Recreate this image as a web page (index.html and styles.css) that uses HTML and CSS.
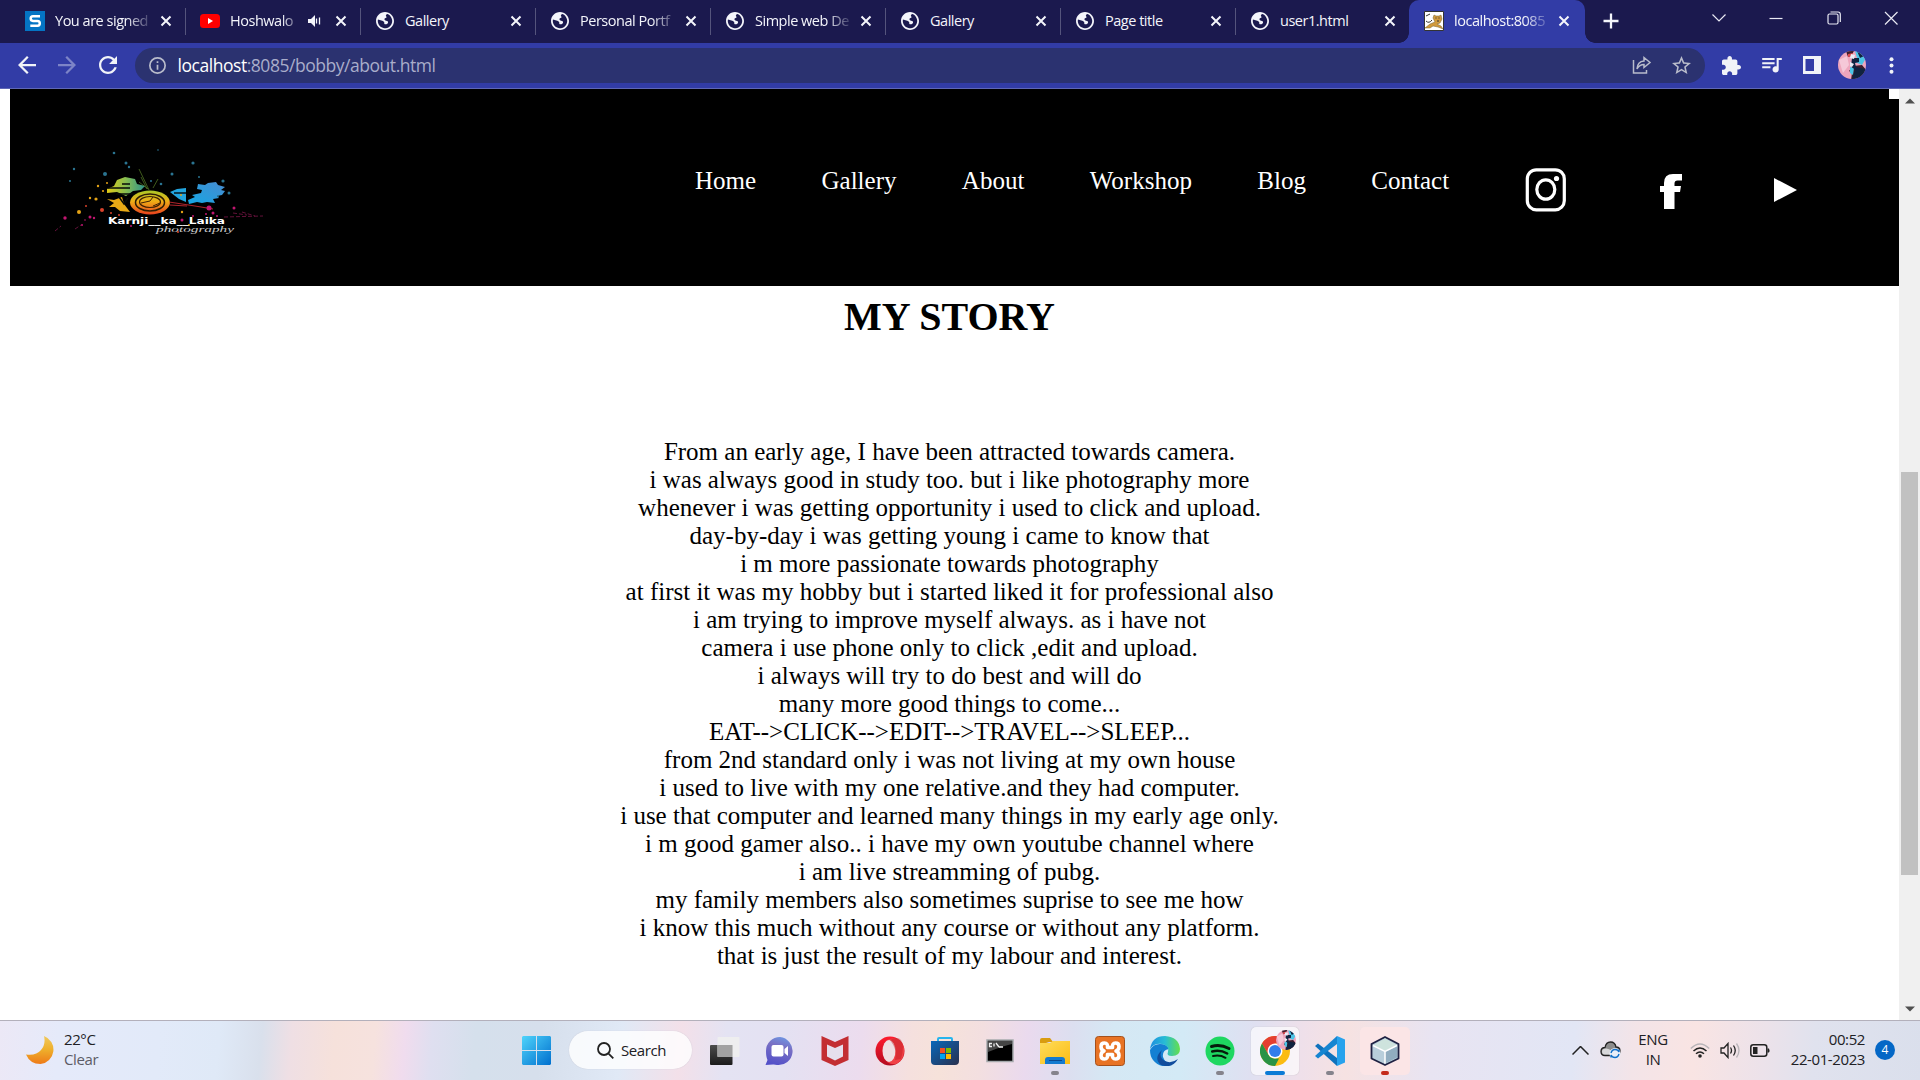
FILE: index.html
```html
<!DOCTYPE html>
<html lang="en">
<head>
<meta charset="utf-8">
<title>My Story</title>
<link rel="stylesheet" href="styles.css">
</head>
<body>
<svg class="defs" width="0" height="0">
  <defs>
    <symbol id="globe" viewBox="2 2 20 20"><path d="M12 2C6.480 2 2 6.480 2 12s4.480 10 10 10 10-4.480 10-10S17.520 2 12 2zm-1 17.930c-3.950-.49-7-3.850-7-7.930 0-.62.08-1.210.21-1.790 2.500.6 5.500 1.200 6.790 2.790.6 1-.4 2.300 1 2.600 1.600.2 3.600-.4 3.400-2.600-.2-1.300-2-1.200-3-1.600-1.500-.6-1.400-2.400.2-2.700 1.400-.2 1.400-1.400.6-2.100-.8-.8.4-2 1.800-2.300C17.500 5.300 20 8.650 20 12c0 4-3 7.600-7 7.930z"/></symbol>
    <symbol id="x" viewBox="0 0 12 12"><path d="M1.500 1.500l9 9M10.500 1.500l-9 9" fill="none" stroke="currentColor" stroke-width="2"/></symbol>
    <symbol id="arrow" viewBox="4 4 16 16"><path d="M20 11H7.830l5.590-5.590L12 4l-8 8 8 8 1.410-1.410L7.830 13H20v-2z"/></symbol>
    <symbol id="avatar" viewBox="0 0 28 28">
      <clipPath id="face"><circle cx="14" cy="14" r="14"/></clipPath>
      <g clip-path="url(#face)"><path fill="#eea6bd" d="M0 0h28v28H0z"/><path fill="#f5c8d8" d="M1 9l8-4 2 9-6 8z"/><path fill="#3c1d2c" d="M8 0h8l-3 5-3 1zM15 15l9-1 5 6v9H13l1-7-3-2z"/><path fill="#4cc5e6" d="M17 0h6l5 7-4 7-7-3 2-4zM12 16l4 1-1 7-3-2z"/><path fill="#102340" d="M14 7h7v4l-4 1 1 4 9 2v9l-13 1 3-9-4-4zM19 0h4l3 5-4 2z"/><path fill="#dc4a4f" d="M10 3l5-1-1 3-4 1z"/><path fill="#e9eef7" d="M13 3l4 1-1 4-4-1zM12 11l4 2-2 3-2-1z"/></g>
    </symbol>
  </defs>
</svg>

<div class="window">
  <div class="tabstrip">
    <div class="tab"><svg class="fav" viewBox="0 0 20 20"><path fill="#0474c4" d="M0 0h20v20H0z"/><path fill="none" stroke="#fff" stroke-width="2.500" d="M15 5.200H8Q5.700 5.200 5.700 7.500T8 9.900h4.500q2.300 0 2.300 2.400t-2.300 2.500H5.300"/></svg><span class="title fade">You are signed</span><svg class="close"><use href="#x"/></svg></div>
    <div class="tab"><svg class="fav" viewBox="0 0 20 20"><rect y="3" width="20" height="14" rx="3.500" fill="#f00"/><path fill="#fff" d="M8 7v6l5-3z"/></svg><span class="title fade short">Hoshwalo</span><svg class="speaker" viewBox="0 0 13 12"><path fill="currentColor" d="M0 4h3l4-4v12L3 8H0z"/><path fill="none" stroke="currentColor" stroke-width="1.300" d="M8.500 3.500v5M11.500 2.500v7"/></svg><svg class="close"><use href="#x"/></svg></div>
    <div class="tab"><svg class="fav globe"><use href="#globe"/></svg><span class="title">Gallery</span><svg class="close"><use href="#x"/></svg></div>
    <div class="tab"><svg class="fav globe"><use href="#globe"/></svg><span class="title fade">Personal Portf</span><svg class="close"><use href="#x"/></svg></div>
    <div class="tab"><svg class="fav globe"><use href="#globe"/></svg><span class="title fade">Simple web De</span><svg class="close"><use href="#x"/></svg></div>
    <div class="tab"><svg class="fav globe"><use href="#globe"/></svg><span class="title">Gallery</span><svg class="close"><use href="#x"/></svg></div>
    <div class="tab"><svg class="fav globe"><use href="#globe"/></svg><span class="title">Page title</span><svg class="close"><use href="#x"/></svg></div>
    <div class="tab last"><svg class="fav globe"><use href="#globe"/></svg><span class="title">user1.html</span><svg class="close"><use href="#x"/></svg></div>
    <div class="tab active"><svg class="fav" viewBox="0 0 20 20"><path fill="#fff" stroke="#333" d="M.5.5h19v19H.5z"/><path fill="#d19a3d" stroke="#75602f" stroke-width=".5" d="M10 4l2 1h3l2-1 1 4-2 4-3 1 4 2 2 3-5-2-5-1-3 2H1l5-4 5-2-2-4z"/><path fill="none" stroke="#333" d="M2 10q3 3 6-1M2 5l4-2M11.500 7h1m2 0h1M13 10h2"/></svg><span class="title fade">localhost:8085</span><svg class="close"><use href="#x"/></svg></div>
    <svg class="plus" viewBox="0 0 16 16"><path d="M8 .5v15M.5 8h15" fill="none" stroke="currentColor" stroke-width="2.300"/></svg>
    <div class="controls">
      <svg viewBox="0 0 14 14"><path d="M.5 3.500L7 10l6.500-6.500"/></svg>
      <svg viewBox="0 0 14 14"><path d="M.5 7.500h13"/></svg>
      <svg viewBox="0 0 14 14"><path d="M2.500 3h7q1.500 0 1.500 1.500v7q0 1.500-1.500 1.500h-7Q1 13 1 11.500v-7Q1 3 2.500 3zM3.500 1H11q2.300 0 2.300 2.300V11"/></svg>
      <svg viewBox="0 0 14 14"><path d="M1 1l12.500 12.500M13.500 1L1 13.500"/></svg>
    </div>
  </div>

  <div class="toolbar">
    <svg class="nav-icon" viewBox="0 0 18 18"><use href="#arrow" width="18" height="18"/></svg>
    <svg class="nav-icon forward" viewBox="0 0 18 18"><use href="#arrow" width="18" height="18"/></svg>
    <svg class="nav-icon reload" viewBox="4 4 16 16"><path d="M17.650 6.350C16.200 4.900 14.210 4 12 4c-4.420 0-7.990 3.580-7.990 8s3.570 8 7.990 8c3.730 0 6.840-2.550 7.730-6h-2.080c-.82 2.330-3.040 4-5.650 4-3.310 0-6-2.690-6-6s2.690-6 6-6c1.660 0 3.140.69 4.220 1.780L13 11h7V4l-2.350 2.350z"/></svg>
    <div class="omnibox">
      <svg class="info" viewBox="2 2 20 20"><circle cx="12" cy="12" r="9" fill="none" stroke="currentColor" stroke-width="2"/><path d="M11 7h2v2h-2zM11 11h2v6h-2z"/></svg>
      <span class="url"><b>localhost</b>:8085/bobby/about.html</span>
      <svg class="share" viewBox="0 0 20 20"><path fill="none" stroke="currentColor" stroke-width="1.500" d="M1.500 5v13h13v-3M5 14q.5-7.500 7-8V2.500l6 5-6 5V9.500Q7.500 9.500 5 14z"/></svg>
      <svg class="star" viewBox="2 2 20 20"><path d="M22 9.240l-7.190-.62L12 2 9.190 8.630 2 9.240l5.460 4.730L5.820 21 12 17.270 18.180 21l-1.630-7.030L22 9.240zM12 15.400l-3.760 2.270 1-4.280-3.320-2.880 4.380-.38L12 6.100l1.710 4.040 4.380.38-3.320 2.880 1 4.280L12 15.400z"/></svg>
    </div>
    <div class="actions">
      <span><svg width="19" height="19" viewBox="2 1 21 21"><path d="M20.500 11H19V7c0-1.100-.9-2-2-2h-4V3.500C13 2.120 11.880 1 10.500 1S8 2.120 8 3.500V5H4c-1.100 0-1.990.9-1.990 2v3.800H3.500c1.490 0 2.700 1.210 2.700 2.700s-1.210 2.700-2.700 2.700H2V20c0 1.100.9 2 2 2h3.800v-1.500c0-1.490 1.210-2.700 2.700-2.700s2.700 1.210 2.700 2.700V22H17c1.100 0 2-.9 2-2v-4h1.500c1.380 0 2.500-1.120 2.500-2.500S21.880 11 20.500 11z"/></svg></span>
      <span><svg width="20" height="16" viewBox="3 5 19 15.500"><path d="M15 6H3v2h12V6zm0 4H3v2h12v-2zM3 16h8v-2H3v2zM17 6v8.180c-.31-.11-.65-.18-1-.18-1.660 0-3 1.340-3 3s1.340 3 3 3 3-1.340 3-3V8h3V6h-5z"/></svg></span>
      <span><svg width="18" height="18" viewBox="0 0 18 18"><path fill-rule="evenodd" d="M0 0h18v18H0zM2.500 3v12H11V3z"/></svg></span>
      <span><svg width="28" height="28"><use href="#avatar"/></svg></span>
      <span><svg width="5" height="17" viewBox="0 0 5 17"><circle cx="2.500" cy="2.200" r="2"/><circle cx="2.500" cy="8.500" r="2"/><circle cx="2.500" cy="14.800" r="2"/></svg></span>
    </div>
  </div>

  <div class="viewport">
    <main class="page">
      <header class="site-header">
        <svg class="logo" viewBox="50 140 220 100" width="220" height="100">
          <defs>
            <linearGradient id="lens" x2="0" y2="1"><stop stop-color="#aac928"/><stop offset=".45" stop-color="#efae16"/><stop offset="1" stop-color="#e9401e"/></linearGradient>
            <linearGradient id="body" x2="1"><stop stop-color="#e2cb16"/><stop offset=".5" stop-color="#86bd51"/><stop offset="1" stop-color="#2d938c"/></linearGradient>
            <linearGradient id="sky" x1="1" x2="0" y2="1"><stop stop-color="#498bd0"/><stop offset="1" stop-color="#13a7e4"/></linearGradient>
          </defs>
          <path fill="url(#body)" d="M107 189l7-3 3-6 8-3 10 2 2 5 8 2-4 4-8 1-7 5-9-4-10 1z"/>
          <path fill="#e7a916" d="M107 199l7 1 8-3 2 7 6 8-10-1-5-4-6 0 5-4z"/>
          <path fill="none" stroke="#070b07" stroke-width="1.500" d="M108 188h22M116 194h20M122 184h8M119 197l5 7 4-6"/>
          <ellipse cx="150" cy="202.500" rx="20" ry="12" fill="url(#lens)"/>
          <ellipse cx="150" cy="202.500" rx="14.500" ry="8.500" fill="none" stroke="#2d1d04" stroke-width="1.500"/>
          <ellipse cx="150" cy="202" rx="10.500" ry="5.500" fill="none" stroke="#402104" stroke-width="1.200"/>
          <path stroke="#402104" fill="none" d="M141 203l9-2 3-4m0 9l7-3"/>
          <path fill="#22a5df" d="M170 192l7-3 9-1v14l-7-3z"/><path stroke="#04141b" stroke-width="1.500" d="M174 193h12"/>
          <path fill="url(#sky)" d="M188 200l7-3-3-2 9-2 1-3-5-1 1-5 7 1 3-2 8-1 2 3 7 2-4 3 4 1-3 4-5 1 2 2-6 1 2 4-8-1-5 1-5-1-8 2z"/>
          <path stroke="#81b93b" stroke-width=".7" opacity=".7" d="M149 190l-10-21M147 189l-6-12M153 188l5-9M148 189l-9-7"/>
          <path stroke="#db2d36" stroke-width=".8" d="M169 202l26 4 18 3M170 205l17 1"/>
          <path stroke="#7b1548" stroke-width=".8" stroke-dasharray="4 2" d="M224 217l39-1M233 213l14 2M242 212l13 4M55 231l6-5M75 229l6-4"/>
          <g fill="#e3a216"><circle cx="96" cy="199" r="1.600"/><circle cx="90" cy="198" r="1.200"/><circle cx="79" cy="212" r="2"/><circle cx="103" cy="191" r="1.100"/><circle cx="98" cy="186" r="1.200"/><circle cx="107" cy="183" r="1"/><circle cx="182" cy="212" r="1.200"/><circle cx="189" cy="225" r="1"/><circle cx="181" cy="195" r="1"/></g>
          <g fill="#d8422b"><circle cx="102" cy="210" r="2"/><circle cx="111" cy="213" r="1"/><circle cx="178" cy="232" r="1"/><circle cx="119" cy="215" r="1"/><circle cx="86" cy="206" r="1"/></g>
          <g fill="#c11670"><circle cx="65" cy="218" r="1.700"/><circle cx="90" cy="217" r="1.500"/><circle cx="94" cy="218" r="1.200"/><circle cx="85" cy="220" r=".8"/><circle cx="209" cy="208" r="2.500"/><circle cx="213" cy="213" r="1.500"/><circle cx="206" cy="214" r="1"/><circle cx="217" cy="216" r="1"/><circle cx="234" cy="208" r="1.500"/><circle cx="182" cy="220" r="1.500"/><circle cx="193" cy="216" r="1"/><circle cx="82" cy="225" r="1"/><circle cx="131" cy="226" r="1"/></g>
          <g fill="#2a7491"><circle cx="114" cy="153" r="1.300"/><circle cx="193" cy="163" r="1.600"/><circle cx="172" cy="174" r="1.500"/><circle cx="74" cy="169" r="1.200"/><circle cx="70" cy="181" r="1"/><circle cx="126" cy="163" r="1.500"/><circle cx="129" cy="167" r="1.200"/><circle cx="161" cy="184" r="1.300"/><circle cx="151" cy="181" r="1"/><circle cx="199" cy="177" r="1"/><circle cx="105" cy="174" r="2"/><circle cx="158" cy="150" r=".8"/><circle cx="229" cy="193" r="1.500"/><circle cx="223" cy="181" r="1.600"/><circle cx="218" cy="196" r="1"/></g>
          <text class="logo-name" x="108" y="223.500" textLength="117" lengthAdjust="spacingAndGlyphs">Karnji__ka__Laika</text>
          <text class="logo-sub" x="156" y="232" textLength="78" lengthAdjust="spacingAndGlyphs">photography</text>
        </svg>
        <nav class="menu">
          <a>Home</a><a>Gallery</a><a>About</a><a>Workshop</a><a>Blog</a><a>Contact</a>
        </nav>
        <div class="social">
          <svg width="42" height="44" viewBox="0 0 42 44"><g fill="none" stroke="#fff" stroke-width="3.200"><rect x="2.300" y="1.800" width="37" height="40" rx="9"/><ellipse cx="20.800" cy="21.500" rx="9" ry="9.700"/></g><circle cx="31.500" cy="10.500" r="2.600" fill="#fff"/></svg>
          <svg width="22" height="35" viewBox="0 0 22 35"><path fill="#fff" d="M4 35V18H0v-6h4V9Q4 0 13 0h9v6.500h-4.500q-3 0-3 3V12h6.500l-1 6h-5.500v17z"/></svg>
          <svg width="23" height="24" viewBox="0 0 23 24"><path fill="#fff" d="M0 0l23 12L0 24z"/></svg>
        </div>
      </header>
      <h1>MY STORY</h1>
      <p class="story">From an early age, I have been attracted towards camera.<br>i was always good in study too. but i like photography more<br>whenever i was getting opportunity i used to click and upload.<br>day-by-day i was getting young i came to know that<br>i m more passionate towards photography<br>at first it was my hobby but i started liked it for professional also<br>i am trying to improve myself always. as i have not<br>camera i use phone only to click ,edit and upload.<br>i always will try to do best and will do<br>many more good things to come...<br>EAT--&gt;CLICK--&gt;EDIT--&gt;TRAVEL--&gt;SLEEP...<br>from 2nd standard only i was not living at my own house<br>i used to live with my one relative.and they had computer.<br>i use that computer and learned many things in my early age only.<br>i m good gamer also.. i have my own youtube channel where<br>i am live streamming of pubg.<br>my family members also sometimes suprise to see me how<br>i know this much without any course or without any platform.<br>that is just the result of my labour and interest.</p>
    </main>
    <div class="scrollbar">
      <svg width="10" height="6" viewBox="0 0 10 6"><path fill="#505050" d="M0 5.500L5 .5l5 5z"/></svg>
      <div class="track"><div class="thumb"></div></div>
      <svg width="10" height="6" viewBox="0 0 10 6"><path fill="#505050" d="M0 .5l5 5 5-5z"/></svg>
    </div>
  </div>

  <div class="taskbar">
    <div class="weather">
      <svg width="28" height="28" viewBox="0 0 28 28"><defs><linearGradient id="moon" x2="0" y2="1"><stop stop-color="#f0c95c"/><stop offset=".5" stop-color="#eeae2b"/><stop offset="1" stop-color="#ee7a18"/></linearGradient></defs><path fill="url(#moon)" d="M18 0A14.500 14.500 0 0 1 14.500 28Q4 28 0 18.500 10 20 15 14T18 0z"/></svg>
      <div class="stack"><span>22°C</span><span class="muted">Clear</span></div>
    </div>
    <svg class="start" viewBox="0 0 29 29"><defs><linearGradient id="win" x2="1" y2="1"><stop stop-color="#4fd4fb"/><stop offset="1" stop-color="#006fce"/></linearGradient></defs><path fill="url(#win)" d="M1 0h13v14H0V1zM15 0h13l1 1v13H15zM0 15h14v14H1l-1-1zM15 15h14v13l-1 1H15z"/></svg>
    <div class="search"><svg width="17" height="17" viewBox="0 0 17 17"><path fill="none" stroke="#222" stroke-width="1.800" d="M11.300 11.300l5 5M1 7a6 6 0 1 0 12 0A6 6 0 1 0 1 7"/></svg><span>Search</span></div>
    <div class="apps">
      <span class="app"><svg viewBox="0 0 30 30"><defs><linearGradient id="tv" x2="0" y2="1"><stop stop-color="#4c4c4c"/><stop offset="1" stop-color="#1b1b1b"/></linearGradient></defs><rect y="9" width="22.500" height="20" rx="1" fill="url(#tv)"/><rect x="7.500" y="1" width="22" height="20" rx="1" fill="#eee" opacity=".95"/><path fill="#a2a2a2" d="M7.500 9h15v12h-15z"/></svg></span>
      <span class="app"><svg viewBox="0 0 30 30"><defs><linearGradient id="chat" x1=".7" x2=".4" y2="1"><stop stop-color="#6e96e2"/><stop offset=".35" stop-color="#7970c4"/><stop offset="1" stop-color="#5350c8"/></linearGradient></defs><path fill="url(#chat)" d="M15 1a14 14 0 1 1-3 28q-3-.8-4-.4L.5 29l2-5Q1 21 1 15A14 14 0 0 1 15 1z"/><rect x="6.500" y="9" width="12" height="11.500" rx="2" fill="#fff"/><path fill="#fff" d="M19.500 13l3.500-3v10l-3.500-3z"/></svg></span>
      <span class="app"><svg viewBox="0 0 30 30"><path fill="#c32e32" d="M1.500 0L15 6 28.500 0v24L15 30 1.500 24z"/><path fill="#e6dfec" d="M7 8.500L15 12l8-3.500v12L15 24.500 7 20.500z"/></svg></span>
      <span class="app"><svg viewBox="0 0 30 30"><defs><linearGradient id="op" x2="0" y2="1"><stop stop-color="#ff1b2d"/><stop offset="1" stop-color="#b40c20"/></linearGradient></defs><circle cx="15" cy="15" r="14.500" fill="url(#op)"/><path fill="#f04247" d="M12 4q13-6 17 8 1 10-6 15-5 3-11-1z"/><ellipse cx="14" cy="15" rx="6.500" ry="11" fill="#efdfe2"/><path fill="#ba1118" d="M15 4q8-4 11 0 4 5 0 19l-6 1q3-10-5-20z" opacity=".4"/></svg></span>
      <span class="app"><svg viewBox="0 0 30 30"><defs><linearGradient id="st" x2="1" y2="1"><stop stop-color="#0867ba"/><stop offset="1" stop-color="#29304e"/></linearGradient></defs><path fill="none" stroke="#27b5ed" stroke-width="2" d="M8 6V3q0-1 1-1h12q1 0 1 1v3"/><path fill="url(#st)" d="M1 5h28v20q0 4-4 4H5q-4 0-4-4z"/><path fill="#f25022" d="M10 12h5v5h-5z"/><path fill="#7fba00" d="M16 12h5v5h-5z"/><path fill="#00a4ef" d="M10 18h5v5h-5z"/><path fill="#ffb900" d="M16 18h5v5h-5z"/></svg></span>
      <span class="app"><svg viewBox="0 0 30 30"><path fill="#000" stroke="#a6aaad" stroke-width="1.500" d="M2 4h26v21.500H2z"/><path fill="#444" d="M3 5h24v3Q18 10 3 16z"/><path fill="none" stroke="#eee" stroke-width="1.300" d="M7 7.500H4.500v3H7M9 7.500v3M11 7l3 4M14 11h4"/></svg></span>
      <span class="app"><svg viewBox="0 0 30 30"><defs><linearGradient id="fo" x2="1" y2="1"><stop stop-color="#ffdc5b"/><stop offset="1" stop-color="#fbbd15"/></linearGradient></defs><path fill="#d99c10" d="M0 4q0-2 2-2h8l3 4h-4L0 9z"/><path fill="url(#fo)" d="M0 7h10l3-2h17v23H0z"/><path fill="#147bd0" d="M5 28v-4q0-3 3-3h14q3 0 3 3v4z"/><path stroke="#0a4a8f" d="M9 24.500h13"/></svg><i class="run"></i></span>
      <span class="app"><svg viewBox="0 0 30 30"><rect x=".5" y=".5" width="29" height="29" rx="3" fill="#e87324" stroke="#a5501b"/><path fill="none" stroke="#fff" stroke-width="3.600" stroke-linejoin="round" d="M9.500 7Q6 7 6 10.500T9 15Q6 16 6 19.500T9.500 23Q13 23 12.500 18.500h5Q17 23 20.500 23T24 19.500 21 15Q24 14 24 10.500T20.500 7Q17 7 17.500 11.500h-5Q13 7 9.500 7z"/></svg></span>
      <span class="app"><svg viewBox="0 0 30 30"><defs><linearGradient id="ed" x2="1"><stop stop-color="#1e8fe0"/><stop offset=".5" stop-color="#27bcd5"/><stop offset="1" stop-color="#66e04b"/></linearGradient></defs><path fill="#1480d3" d="M0 14Q3 8 10 8t9 5q-7 1-6 8 2 6 9 8-12 4-19-5-3-4-3-10z"/><path fill="url(#ed)" d="M0 13Q2 0 15 0q14 1 15 13 0 7-8 7-6 0-4-4 2-6-6-8Q4 7 0 13z"/><path fill="#114d9d" d="M12 14q-4 7 3 11 6 3 13-2-6 10-17 6-8-7 1-15z"/></svg></span>
      <span class="app"><svg viewBox="0 0 30 30"><circle cx="15" cy="15" r="14.500" fill="#1ed760"/><path fill="none" stroke="#061b0b" stroke-linecap="round" d="M6.500 10.500q9-2.500 17.500 2" stroke-width="3"/><path fill="none" stroke="#061b0b" stroke-linecap="round" stroke-width="2.500" d="M7.200 15.500q8-2 15 2"/><path fill="none" stroke="#061b0b" stroke-linecap="round" stroke-width="2" d="M8 20q7-1.500 12.500 1.800"/></svg><i class="run"></i></span>
      <span class="app current"><svg viewBox="0 0 30 30"><circle cx="15" cy="15" r="15" fill="#fbbc12"/><path fill="#e43e30" d="M2 7.500A15 15 0 0 1 28 7.500H15L8.500 18.500z"/><path fill="#299345" d="M2 7.500l6.500 11.250Q11 23 15 22.500h4L15 30A15 15 0 0 1 2 7.500z"/><circle cx="15" cy="15" r="7.500" fill="#fff"/><circle cx="15" cy="15" r="6" fill="#327deb"/></svg><svg class="badge"><use href="#avatar"/></svg><i class="run"></i></span>
      <span class="app"><svg viewBox="0 0 30 30"><path fill="#0f72bd" d="M0 10l3-2.500 19 14.500V30z"/><path fill="#1685d1" d="M0 20l3 2.500L22 8V0z"/><path fill="#27a2ed" d="M22 0l8 3.500v23L22 30z"/></svg><i class="run"></i></span>
      <span class="app alert"><svg viewBox="0 0 30 30"><path fill="#b8cedb" stroke="#1e2142" stroke-width="1.800" stroke-linejoin="round" d="M15 1l13.500 7v14.500L15 29 1.500 22.500V8z"/><path fill="#cee3dd" d="M15 2.500L26.500 9 15 15 3.500 9z"/><path fill="#91adc0" d="M15 16l12-6v11.500l-12 6z"/><path stroke="#fff" stroke-width="1.500" fill="none" d="M3 9.500l12 6 12-6M15 15.500v12"/></svg><i class="run"></i></span>
    </div>
    <div class="tray">
      <svg class="chev" width="17" height="9" viewBox="0 0 17 9"><path fill="none" stroke="#222" stroke-width="1.500" d="M.5 8.500l8-8 8 8"/></svg>
      <svg class="cloud" width="21" height="18" viewBox="0 0 21 18"><path fill="#8c8c8c" stroke="#222" stroke-width="1.300" d="M5 14.500q-4 0-4-4t4-4Q6 1 10.500 1T16 6q4 0 4 4t-4 4.500z"/><path fill="#d8d8da" d="M5 13.500q-3 0-3-3t4-3q5 0 8 6z"/><circle cx="15" cy="12.500" r="5.500" fill="#e9eef8"/><path fill="none" stroke="#126fc8" stroke-width="1.400" d="M11 12q1-3.500 4-3.500t4 2.500V8.500M19 13q-1 3.500-4 3.500T11 14v2.500"/></svg>
      <div class="stack lang"><span>ENG</span><span>IN</span></div>
      <svg class="wifi" width="20" height="15" viewBox="0 0 20 15"><g fill="none" stroke="#222" stroke-width="1.500"><path stroke="#b8b4b8" d="M.8 5.500q9.200-9 18.400 0"/><path d="M3.500 8q6.500-6 13 0M6 10.700q4-3.500 8 0"/></g><circle cx="10" cy="13" r="1.800" fill="#222"/></svg>
      <svg class="vol" width="20" height="17" viewBox="0 0 20 17"><g fill="none" stroke="#222" stroke-width="1.300"><path d="M1 6h3l4-4.500v14L4 11H1zM10.500 5.500q2 3 0 6M13.500 3.500q3.500 5 0 10"/><path stroke="#b8b4b8" d="M16.500 1.500q5 7 0 14"/></g></svg>
      <svg class="batt" width="20" height="13" viewBox="0 0 20 13"><rect x=".8" y=".8" width="16" height="11.400" rx="2.500" fill="none" stroke="#222" stroke-width="1.500"/><path fill="#222" d="M3 3h4.500v7H3zM17.500 4.500h1.500q1 2 0 4h-1.500z"/></svg>
      <div class="stack clock"><span>00:52</span><span>22-01-2023</span></div>
      <span class="count">4</span>
    </div>
  </div>
</div>
</body>
</html>
```
FILE: styles.css
```css
* { box-sizing: border-box; }
body { margin: 0; background: #fff; overflow: hidden; }
svg { display: block; flex: none; }
.defs { position: absolute; }
.window { display: flex; flex-direction: column; width: 1920px; height: 1080px; font-family: "Open Sans", "Noto Sans", sans-serif; }

/* Tab strip */
.tabstrip { display: flex; height: 43px; padding-left: 11px; background: #1b194e; color: #f4f5fb; fill: #f4f5fb; }
.tab { display: flex; align-items: center; width: 175px; padding: 0 13px 1px 14px; border-right: 1px solid transparent; border-image: linear-gradient(transparent 9px, #55547c 9px, #55547c 34px, transparent 34px) 1; }
.fav { width: 20px; height: 20px; margin-right: 10px; }
.fav.globe { width: 18px; height: 18px; margin: 0 11px 0 1px; }
.title { flex: 1; overflow: hidden; white-space: nowrap; font-size: 14.500px; line-height: 20px; letter-spacing: -0.480px; }
.fade { margin-right: 6px; -webkit-mask-image: linear-gradient(90deg, #000 72%, transparent); mask-image: linear-gradient(90deg, #000 72%, transparent); }
.close { width: 12px; height: 12px; }
.speaker { width: 13px; height: 12px; margin-right: 14px; }
.tab.last { width: 173px; padding-right: 12px; border-image: none; }
.tab.active { position: relative; width: 176px; padding: 0 15px 1px; border: 0; border-radius: 10px 10px 0 0; background: #323ca6; }
.tab.active::before, .tab.active::after { content: ""; position: absolute; bottom: 0; width: 10px; height: 10px; }
.tab.active::before { left: -10px; background: radial-gradient(circle at 0 0, transparent 9.500px, #323ca6 10px); }
.tab.active::after { right: -10px; background: radial-gradient(circle at 100% 0, transparent 9.500px, #323ca6 10px); }
.plus { width: 16px; height: 16px; margin: 13px 0 0 18px; }
.controls { display: flex; gap: 43.300px; margin: 11px 0 0 93px; }
.controls svg { width: 14px; height: 14px; fill: none; stroke: #e9e9f3; stroke-width: 1.200; }

/* Toolbar */
.toolbar { display: flex; align-items: center; height: 46px; padding: 0 6px 1px 18px; border-bottom: 1px solid #5f67b5; background: #323ca6; color: #f4f5fb; fill: #f1f3f8; }
.nav-icon { width: 18px; height: 18px; margin-right: 22px; }
.forward { transform: scaleX(-1); fill: #7d84c7; margin-right: 22.500px; }
.reload { margin-right: 18px; }
.omnibox { display: flex; align-items: center; width: 1570px; height: 35px; padding: 0 14px; border-radius: 18px; background: #2b3270; color: #b9bccb; fill: #b9bccb; }
.info { width: 17px; height: 17px; margin-right: 12px; }
.url { flex: 1; font-size: 17.500px; line-height: 24px; letter-spacing: -0.460px; color: #a9adca; }
.url b { font-weight: 400; color: #fff; }
.share { width: 20px; height: 20px; margin-right: 20px; }
.star { width: 19px; height: 19px; }
.actions { display: flex; margin-left: 7px; }
.actions span { display: grid; place-items: center; width: 40px; height: 35px; }

/* Page */
.viewport { display: flex; height: 931px; font-family: "Liberation Serif", "Times New Roman", serif; }
.page { width: 1899px; background: #fff; }
.site-header { position: relative; display: flex; align-items: flex-start; height: 197px; margin-left: 10px; background: #000; }
.site-header::after { content: ""; position: absolute; top: 0; right: 0; width: 10px; height: 10px; background: #fff; }
.logo { margin: 51px 0 0 40px; }
.logo-name { font: bold 8px "DejaVu Sans", sans-serif; fill: #fff; }
.logo-sub { font: italic 9px "Liberation Serif", serif; fill: #c8c8c8; }
.menu { display: flex; gap: 65.400px; margin: 78px 0 0 425px; }
.menu a { font-size: 25px; line-height: 28px; color: #fff; }
.social { display: flex; align-items: flex-start; margin: 79px 0 0 75.500px; }
.social svg:nth-child(2) { margin: 6px 92px 0 93px; }
.social svg:nth-child(3) { margin-top: 10px; }
h1 { margin: 8px 0 0; font-size: 40px; line-height: 46px; text-align: center; }
.story { margin: 98px 0 0; font-size: 25px; line-height: 28px; text-align: center; color: #000; }
.scrollbar { display: flex; flex-direction: column; align-items: center; width: 21px; padding: 9px 0 8px; background: #f0f0f0; }
.track { flex: 1; width: 17px; padding-top: 368px; }
.thumb { height: 403px; background: #c1c1c1; }

/* Taskbar */
.taskbar { display: flex; align-items: center; height: 60px; padding-bottom: 1px; border-top: 1px solid #b3b0bb; font-size: 15px; color: #202024;
  background: linear-gradient(95deg, #ece8f6 0, #e5eafa 60px, #e2eaf9 160px, #dfe9f7 220px, #d9e0ec 262px, #efdfe4 292px, #f6e1db 335px, #f6e2de 375px, #f0dcee 405px, #dfdff0 432px, #d5e0ec 475px, #d6dfec 540px, #e0e9f6 620px, #f3e0e9 680px, #e4e3f3 725px, #e4e1f2 785px, #ecdcee 860px, #f5e0de 910px, #f6e2da 940px, #f3dfe0 980px, #eadaee 1025px, #dcdff0 1070px, #d5e8f4 1110px, #d3eaf6 1180px, #dfe0f1 1250px, #efe0ea 1300px, #f6e2e2 1345px, #e8e4f2 1430px, #e2e6f5 1570px, #f3e4e8 1630px, #f9e4e3 1690px, #ece2ea 1760px, #e0e2ee 1810px, #dadfec 1920px); }
.weather { display: flex; align-items: center; width: 522px; padding-left: 26px; gap: 10px; }
.stack { display: flex; flex-direction: column; padding-bottom: 2px; line-height: 20px; letter-spacing: -0.400px; }
.muted { color: #5c5c66; }
.start { width: 29px; height: 29px; }
.search { display: flex; align-items: center; gap: 7px; width: 123px; height: 38px; margin: 0 5px 0 18px; padding-left: 28px; border-radius: 19px; background: rgba(255, 255, 255, 0.800); box-shadow: 0 0 1px #b9b9c5; letter-spacing: -0.400px; }
.search span { padding-bottom: 1px; }
.apps { display: flex; height: 60px; margin-top: 1px; }
.app { position: relative; display: grid; place-items: center; width: 55px; }
.app > svg { width: 30px; height: 30px; grid-area: 1 / 1; z-index: 1; }
.app .badge { position: absolute; top: 9px; right: 6px; width: 20px; height: 20px; }
.run { position: absolute; bottom: 6px; width: 8px; height: 4px; border-radius: 2px; background: #85838c; z-index: 1; }
.current .run { width: 20px; background: #0b7bd6; }
.alert .run { background: #c42b1c; }
.current::before, .alert::before { content: ""; grid-area: 1 / 1; width: 48px; height: 48px; border-radius: 5px; background: rgba(255, 255, 255, 0.650); box-shadow: 0 0 1px #aaa; }
.alert::before { width: 50px; background: #fbe5e6; box-shadow: none; }
.tray { display: flex; align-items: center; flex: 1; margin-left: 160px; }
.cloud { margin-left: 11px; }
.lang { width: 40px; margin-left: 12px; align-items: center; }
.wifi { margin-left: 17px; }
.vol { margin-left: 10px; }
.batt { margin-left: 10px; }
.clock { width: 95px; align-items: flex-end; }
.count { width: 20px; height: 20px; margin-left: 10px; border-radius: 50%; background: #0467c6; color: #fff; font-size: 12px; line-height: 20px; text-align: center; }
```
